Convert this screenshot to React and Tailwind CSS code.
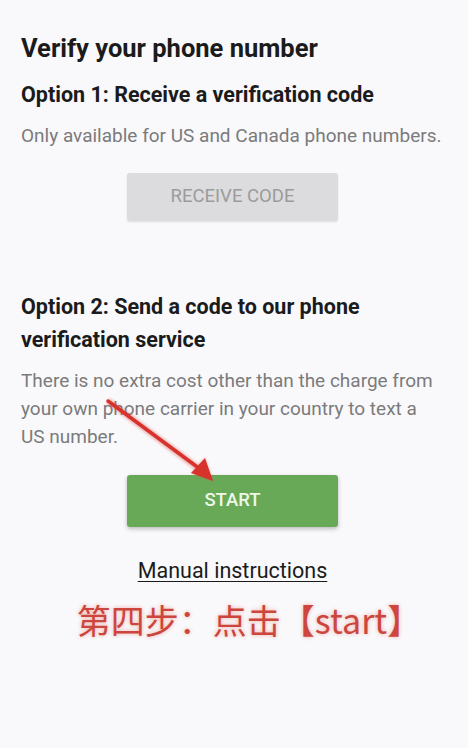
import React from 'react';

const Arrow = () => (
  <svg
    className="absolute left-0 top-0 pointer-events-none"
    width="468"
    height="748"
    viewBox="0 0 468 748"
  >
    <defs>
      <filter id="glow" x="-20%" y="-20%" width="140%" height="140%">
        <feGaussianBlur stdDeviation="1.5" />
      </filter>
    </defs>
    <g opacity="0.45" filter="url(#glow)">
      <line x1="108" y1="401" x2="202" y2="471" stroke="#e0504a" strokeWidth="6" />
      <polygon points="213,481 191,473 205,458" fill="#e0504a" />
    </g>
    <line x1="108" y1="401" x2="200" y2="469" stroke="#d8322c" strokeWidth="3.5" strokeLinecap="round" />
    <polygon points="213,481 191,473 205,458" fill="#d8322c" />
  </svg>
);

const App = () => {
  return (
    <div
      className="relative w-[468px] h-[748px] bg-[#f9f9fb] overflow-hidden"
      style={{ fontFamily: 'Roboto, "Noto Sans CJK SC", sans-serif' }}
    >
      <div className="px-[21px] pt-[33px] flex flex-col">
        {/* Option 1 */}
        <h1 className="text-[25.5px] leading-[30px] font-bold text-[#1b1b1b]">
          Verify your phone number
        </h1>
        <h2 className="mt-[18px] text-[21.5px] leading-[28px] font-bold text-[#1b1b1b]">
          Option 1: Receive a verification code
        </h2>
        <p className="mt-[13px] text-[19px] leading-[28px] text-[#7b7b7b] whitespace-nowrap">
          Only available for US and Canada phone numbers.
        </p>
        <div className="mt-[23px] flex justify-center pr-[3px]">
          <button className="w-[211px] h-[48px] rounded-[3px] bg-[#dcdbdd] text-[#9b9b9b] text-[18.5px] shadow-[0_1px_2px_rgba(0,0,0,0.12)]">
            RECEIVE CODE
          </button>
        </div>

        {/* Option 2 */}
        <h2 className="mt-[69px] text-[21.5px] leading-[33px] font-bold text-[#1b1b1b] pr-[40px]">
          Option 2: Send a code to our phone verification service
        </h2>
        <p className="mt-[11px] text-[19px] leading-[28px] text-[#7b7b7b] pr-[10px]">
          There is no extra cost other than the charge from your own phone carrier in your country to text a US number.
        </p>
        <div className="mt-[24px] flex justify-center pr-[3px]">
          <button className="w-[211px] h-[52px] rounded-[3px] bg-[#67a957] text-[#eef7e8] text-[18.5px] font-medium shadow-[0_2px_4px_rgba(0,0,0,0.25)]">
            START
          </button>
        </div>

        <div className="mt-[30px] flex justify-center pr-[3px]">
          <span className="text-[21.5px] leading-[28px] text-[#1b1b1b] underline underline-offset-[3px] decoration-1">
            Manual instructions
          </span>
        </div>

        <div className="mt-[15px] flex justify-center pl-[30px]">
          <span
            className="text-[34px] leading-[40px] text-[#cc463d] [text-shadow:0_0_4px_rgba(230,120,110,0.6)]"
            style={{ fontFamily: '"Noto Sans CJK SC", sans-serif' }}
          >
            第四步：点击【start】
          </span>
        </div>
      </div>

      <Arrow />
    </div>
  );
};

export default App;
